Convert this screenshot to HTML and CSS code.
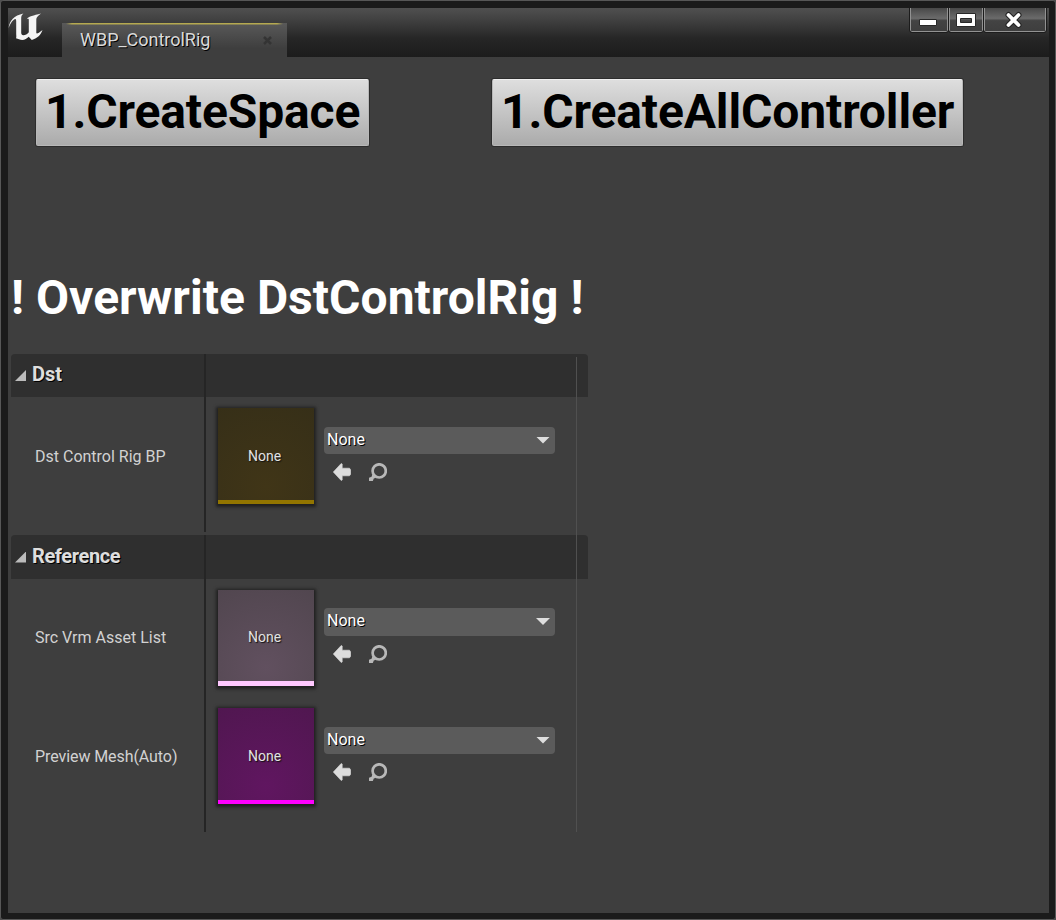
FILE: index.html
```html
<!DOCTYPE html>
<html lang="en">
<head>
<meta charset="utf-8">
<title>WBP_ControlRig</title>
<link rel="stylesheet" href="styles.css">
</head>
<body>
<svg class="defs" aria-hidden="true">
  <symbol id="arrow" viewBox="0 0 18 18"><path fill="#dcdcdc" stroke="#dcdcdc" stroke-width=".6" stroke-linejoin="round" d="M.3 9 8.200.5 9.200 1V5.200H16.500L17.700 7v4.200L16.500 12.800H9.200V17L8.200 17.500Z"/></symbol>
  <symbol id="search" viewBox="0 0 18 18"><circle cx="10.200" cy="7.900" r="6.600" fill="none" stroke="#b8b8b8" stroke-width="2.700"/><path fill="#b8b8b8" d="M3.300 11.200 7 14.800 4.800 15.600 3.800 18H0V14.800L2.600 13.700Z"/></symbol>
</svg>
<div class="window">
  <header class="titlebar">
    <svg class="logo" viewBox="0 0 36 32"><path fill="#f4f4f4" d="M.6 20C1.500 12.500 6 7.400 15.400 5.400 13.500 7 13.200 8.200 13.200 10.500V24.500C13.200 26.300 14 27.200 15.300 27.200 17.200 27.200 19.500 26 20.800 24.200V12C20.800 10.800 20.300 10.300 18.700 11.200 21 7.600 25.200 7.700 33 5.400 29.700 8 28.300 9.200 28.300 11.500V24.500C28.300 26.300 29.800 25.800 34.500 22 32.500 27.500 29 30.300 23.800 32L20.700 28.700C18.800 30.500 16.800 32 14.300 32 11.800 32 10.200 31 8 30.300 8.600 28.800 8.200 27.500 8.200 26V13.500C8.200 10.800 7.500 10.300 5.500 12 3.200 14 2 16.500.6 20Z"/></svg>
    <div class="tab"><span class="tab-title">WBP_ControlRig</span>
      <svg class="tab-close" viewBox="0 0 9 9"><path stroke="#343434" stroke-width="2.500" d="M1 1 8 8M8 1 1 8"/></svg>
    </div>
    <div class="controls">
      <span class="ctl min"><svg viewBox="0 0 36 23"><path fill="#fff" stroke="#282828" d="M8.500 11.500h17v6h-17z"/></svg></span>
      <span class="ctl max"><svg viewBox="0 0 32 23"><path fill="#fff" fill-rule="evenodd" stroke="#282828" d="M6.500 5.500h19v13h-19zM10.500 10.500v4h11v-4z"/></svg></span>
      <span class="ctl close"><svg viewBox="0 0 60 23"><path fill="none" stroke="#242424" stroke-width="6" stroke-linecap="round" d="m23.500 7 10 10m0-10-10 10"/><path fill="none" stroke="#fff" stroke-width="3.800" stroke-linecap="round" d="m23.500 7 10 10m0-10-10 10"/></svg></span>
    </div>
  </header>
  <main class="content">
    <div class="actions">
      <button class="action space"><span>1.CreateSpace</span></button>
      <button class="action all"><span>1.CreateAllController</span></button>
    </div>
    <h1 class="warning">! Overwrite DstControlRig !</h1>
    <div class="details">
      <section class="category">
        <div class="cat-head"><div class="name"><i class="tri"></i>Dst</div><div class="value"></div></div>
        <div class="prop last"><div class="name">Dst Control Rig BP</div><div class="value">
          <div class="thumb blueprint"><span>None</span></div>
          <div class="picker"><div class="combo"><span>None</span><i class="caret"></i></div><div class="tools"><svg><use href="#arrow"/></svg><svg><use href="#search"/></svg></div></div>
        </div></div>
      </section>
      <section class="category">
        <div class="cat-head tall"><div class="name"><i class="tri"></i>Reference</div><div class="value"></div></div>
        <div class="prop asset"><div class="name">Src Vrm Asset List</div><div class="value">
          <div class="thumb vrm"><span>None</span></div>
          <div class="picker"><div class="combo"><span>None</span><i class="caret"></i></div><div class="tools"><svg><use href="#arrow"/></svg><svg><use href="#search"/></svg></div></div>
        </div></div>
        <div class="prop last"><div class="name tight">Preview Mesh(Auto)</div><div class="value">
          <div class="thumb mesh"><span>None</span></div>
          <div class="picker"><div class="combo"><span>None</span><i class="caret"></i></div><div class="tools"><svg><use href="#arrow"/></svg><svg><use href="#search"/></svg></div></div>
        </div></div>
      </section>
      <div class="edge"></div>
    </div>
  </main>
</div>
</body>
</html>
```
FILE: styles.css
```css
* { box-sizing: border-box; }
body { margin: 0; background: #4f4f4f; font-family: Roboto, "Liberation Sans", sans-serif; color: #d2d2d2; }
.defs { position: absolute; width: 0; height: 0; }
.window { width: 1056px; height: 920px; padding: 7px 6px 6px 7px; border: 1px solid #575757; border-radius: 3px; background: #1b1b1b; display: flex; flex-direction: column; }
.titlebar { height: 49px; flex: none; display: flex; background: linear-gradient(#505050, #3e3e3e 28%, #262626 62%, #1c1c1c); }
.logo { width: 36px; height: 32px; flex: none; }
.tab { width: 225px; height: 34px; margin: 15px 0 0 18px; padding: 0 15px 0 18px; display: flex; align-items: center; justify-content: space-between; background: linear-gradient(90deg, transparent 4px, #b5a950 10px, #b5a950 215px, transparent 221px) 0 0 / 100% 1.500px no-repeat, linear-gradient(#595959, #3e3e3e 75%); }
.tab-title { font-size: 18px; line-height: 34px; letter-spacing: -0.020px; color: #dadada; text-shadow: 1px 1px 0 #000; white-space: nowrap; }
.tab-close { width: 9px; height: 9px; }
.controls { margin-left: auto; margin-right: 3px; display: flex; gap: 1px; height: 24px; }
.ctl { height: 24px; border: 1px solid #929292; border-top: 0; border-radius: 0 0 2px 2px; background: linear-gradient(#484848, #6b6b6b 45%, #434343 55%, #3e3e3e); outline: 1px solid #1c1c1c; }
.ctl svg { display: block; width: 100%; height: 23px; }
.min { width: 38px; }
.max { width: 34px; }
.close { width: 62px; }
.content { flex: 1; background: #3e3e3e; padding: 22px 0 0 3px; }
.actions { display: flex; gap: 123px; padding-left: 25px; }
.action { height: 67px; padding: 0 0 1px 8px; text-align: left; border: 1px solid #b8b8b8; border-top-color: #eee; border-radius: 2px; box-shadow: 0 0 0 1px #2d2d2d; background: linear-gradient(#dedede, #ababab); font: 700 48px/60px Roboto, sans-serif; letter-spacing: -0.130px; color: #000; white-space: nowrap; }
.space { width: 333px; }
.all { width: 471px; }
.warning { margin: 122px 0 0; height: 60px; font: 700 48px/60px Roboto, sans-serif; letter-spacing: 0.030px; color: #fff; white-space: nowrap; }
.details { position: relative; width: 577px; margin-top: 26px; }
.category + .category { margin-top: 3px; }
.cat-head, .prop { display: flex; }
.cat-head { height: 43px; background: #2f2f2f; border-radius: 4px 4px 0 0; font-weight: 700; font-size: 20px; color: #dedede; text-shadow: 1px 1px 0 #000; }
.cat-head .name { display: flex; align-items: center; gap: 6px; padding: 0 0 3px 4px; }
.cat-head.tall { height: 44px; letter-spacing: -0.400px; }
.name { width: 193px; flex: none; }
.value { flex: 1; display: flex; border-left: 2px solid #252525; }
.tri { width: 11px; height: 11px; margin-top: 3px; background: #bcbcbc; clip-path: polygon(100% 0, 100% 100%, 0 100%); }
.prop { height: 118px; }
.prop.last { height: 135px; }
.prop .name { padding-left: 24px; font-size: 16px; line-height: 120px; white-space: nowrap; }
.prop.asset .name { line-height: 118px; }
.prop .tight { letter-spacing: -0.080px; }
.prop .value { padding: 11px 0 0 12px; gap: 10px; }
.thumb { width: 96px; height: 96px; text-align: center; line-height: 97px; font-size: 14px; color: #e2e2e2; box-shadow: 0 1px 3px 2px #202020; text-shadow: 1px 1px 1px #111; padding-right: 3px; border-bottom: 4px solid; }
.blueprint { background: radial-gradient(circle at 50% 85%, #403517, #362f18); border-color: #927500; }
.vrm { line-height: 95px; background: radial-gradient(circle at 50% 85%, #61505f, #51464f); border-bottom: 5px solid #ffc8ff; }
.mesh { background: radial-gradient(circle at 50% 85%, #601660, #501750); border-color: #ff00ff; }
.picker { padding-top: 19px; width: 231px; }
.combo { height: 27px; padding: 0 5px 0 3px; border-radius: 4px; background: #5b5b5b; display: flex; align-items: center; justify-content: space-between; font-size: 16px; line-height: 25px; color: #fff; text-shadow: 1px 1px 0 #000; }
.combo span { margin-top: -2px; }
.caret { width: 14px; height: 7px; margin-top: -1px; background: #dedede; clip-path: polygon(0 0, 100% 0, 50% 100%); }
.tools { display: flex; gap: 18px; padding: 9px 0 0 9px; }
.tools svg { width: 18px; height: 18px; }
.asset .picker { padding-top: 18px; }
.asset .combo { height: 28px; }
.asset .combo span { margin-top: -4px; }
.edge { position: absolute; right: 11px; top: 3px; bottom: 0; width: 1px; background: #505050; }
```
